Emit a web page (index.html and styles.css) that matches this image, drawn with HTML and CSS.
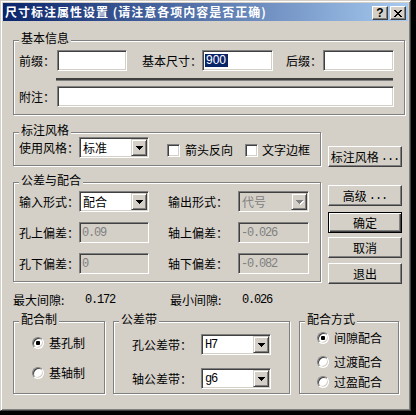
FILE: index.html
```html
<!DOCTYPE html>
<html lang="zh-CN">
<head>
<meta charset="utf-8">
<title>尺寸标注属性设置</title>
<link rel="stylesheet" href="styles.css">
</head>
<body>
<div class="win">
  <div class="titlebar">
    <span class="title">尺寸标注属性设置 (请注意各项内容是否正确)</span>
    <span class="cap-btns">
      <span class="cap-btn help">?</span>
      <span class="cap-btn close"><svg width="8" height="7" viewBox="0 0 8 7"><path d="M0 0h2v1H0zM6 0h2v1H6zM1 1h2v1H1zM5 1h2v1H5zM2 2h4v1H2zM3 3h2v1H3zM2 4h4v1H2zM1 5h2v1H1zM5 5h2v1H5zM0 6h2v1H0zM6 6h2v1H6z"/></svg></span>
    </span>
  </div>
  <div class="client">
    <div class="grp g-basic">
      <span class="grp-title">基本信息</span>
      <div class="row">
        <span class="lbl w38">前缀：</span><span class="field w70"></span>
        <span class="lbl ml15 w60">基本尺寸：</span><span class="field w71"><span class="sel">900</span></span>
        <span class="lbl ml13 w37">后缀：</span><span class="field w71"></span>
      </div>
      <div class="sep"></div>
      <div class="row row-note">
        <span class="lbl w38">附注：</span><span class="field w337"></span>
      </div>
    </div>

    <div class="row-b">
      <div class="grp g-style">
        <span class="grp-title">标注风格</span>
        <span class="lbl w60 tall">使用风格：</span>
        <span class="combo w70"><span class="val">标准</span><span class="dd"><svg width="7" height="4" viewBox="0 0 7 4"><path d="M0 0h7v1H0zM1 1h5v1H1zM2 2h3v1H2zM3 3h1v1H3z"/></svg></span></span>
        <span class="chk ml18"></span><span class="lbl chk-lbl ml5">箭头反向</span>
        <span class="chk ml12"></span><span class="lbl chk-lbl ml4">文字边框</span>
      </div>
      <span class="btn btn-style">标注风格<span class="mono">...</span></span>
    </div>

    <div class="row-c">
      <div class="grp g-tol">
        <span class="grp-title">公差与配合</span>
        <div class="row">
          <span class="lbl w60">输入形式：</span>
          <span class="combo w70"><span class="val">配合</span><span class="dd"><svg width="7" height="4" viewBox="0 0 7 4"><path d="M0 0h7v1H0zM1 1h5v1H1zM2 2h3v1H2zM3 3h1v1H3z"/></svg></span></span>
          <span class="lbl ml19 w70">输出形式：</span>
          <span class="combo w71 disabled"><span class="val">代号</span><span class="dd"><svg width="8" height="5" viewBox="0 0 8 5"><path class="hl" d="M1 1h7v1H1zM2 2h5v1H2zM3 3h3v1H3zM4 4h1v1H4z"/><path d="M0 0h7v1H0zM1 1h5v1H1zM2 2h3v1H2zM3 3h1v1H3z"/></svg></span></span>
        </div>
        <div class="row">
          <span class="lbl w60">孔上偏差：</span>
          <span class="field w70 disabled"><span class="mono">0.09</span></span>
          <span class="lbl ml19 w70">轴上偏差：</span>
          <span class="field w71 disabled"><span class="mono">-0.026</span></span>
        </div>
        <div class="row">
          <span class="lbl w60">孔下偏差：</span>
          <span class="field w70 disabled"><span class="mono">0</span></span>
          <span class="lbl ml19 w70">轴下偏差：</span>
          <span class="field w71 disabled"><span class="mono">-0.082</span></span>
        </div>
      </div>
      <div class="btn-col">
        <span class="btn b-adv">高级<span class="mono">...</span></span>
        <span class="btn btn-default b-ok">确定</span>
        <span class="btn b-cancel">取消</span>
        <span class="btn b-exit">退出</span>
      </div>
    </div>

    <div class="row-d">
      <span class="gap-lbl">最大间隙:</span><span class="mono gap-val">0.172</span>
      <span class="gap-lbl">最小间隙:</span><span class="mono gap-val">0.026</span>
    </div>

    <div class="row-e">
      <div class="grp g-fit">
        <span class="grp-title">配合制</span>
        <div class="opt"><span class="radio on"></span><span class="lbl">基孔制</span></div>
        <div class="opt opt-2"><span class="radio"></span><span class="lbl">基轴制</span></div>
      </div>
      <div class="grp g-band">
        <span class="grp-title">公差带</span>
        <div class="row">
          <span class="lbl w69">孔公差带：</span>
          <span class="combo w70"><span class="val mono">H7</span><span class="dd"><svg width="7" height="4" viewBox="0 0 7 4"><path d="M0 0h7v1H0zM1 1h5v1H1zM2 2h3v1H2zM3 3h1v1H3z"/></svg></span></span>
        </div>
        <div class="row">
          <span class="lbl w69">轴公差带：</span>
          <span class="combo w70"><span class="val mono">g6</span><span class="dd"><svg width="7" height="4" viewBox="0 0 7 4"><path d="M0 0h7v1H0zM1 1h5v1H1zM2 2h3v1H2zM3 3h1v1H3z"/></svg></span></span>
        </div>
      </div>
      <div class="grp g-mode">
        <span class="grp-title">配合方式</span>
        <div class="opt"><span class="radio on"></span><span class="lbl">间隙配合</span></div>
        <div class="opt opt-b"><span class="radio"></span><span class="lbl">过渡配合</span></div>
        <div class="opt opt-c"><span class="radio"></span><span class="lbl">过盈配合</span></div>
      </div>
    </div>
  </div>
</div>
</body>
</html>
```

FILE: styles.css
```css
html, body {
  margin: 0;
  padding: 0;
}
body {
  width: 416px;
  height: 415px;
  overflow: hidden;
  background: #000;
  font-family: "Noto Sans CJK SC", sans-serif;
  font-size: 12px;
  line-height: 14px;
  color: #000;
}

.win {
  box-sizing: border-box;
  width: 411px;
  height: 411px;
  background: #d4d0c8;
  border: 1px solid;
  border-color: #d4d0c8 #404040 #404040 #d4d0c8;
  box-shadow: inset 1px 1px #fff, inset -1px -1px #808080;
  padding: 2px;
}

.titlebar {
  height: 18px;
  display: flex;
  align-items: center;
  justify-content: space-between;
  background: linear-gradient(to right, #0a246a, #a6caf0);
  padding: 0 2px 0 2px;
}
.title {
  color: #fff;
  font-weight: bold;
  letter-spacing: 1px;
  white-space: nowrap;
}
.cap-btns {
  display: flex;
  gap: 2px;
  align-self: flex-end;
  margin-bottom: 1px;
}
.cap-btn {
  box-sizing: border-box;
  width: 16px;
  height: 14px;
  background: #d4d0c8;
  border: 1px solid;
  border-color: #fff #404040 #404040 #fff;
  box-shadow: inset -1px -1px #808080;
  display: flex;
  align-items: center;
  justify-content: center;
}
.help {
  font-family: "Liberation Sans", sans-serif;
  font-weight: bold;
  font-size: 12px;
  line-height: 12px;
}
.close svg { display: block; margin-left: -1px; }

.client {
  padding: 19px 0 0 10px;
}

/* group boxes */
.grp {
  position: relative;
  box-sizing: border-box;
  border: 1px solid #808080;
  box-shadow: inset 1px 1px #fff, 1px 1px #fff;
}
.grp-title {
  position: absolute;
  top: -10px;
  left: 5px;
  padding: 0 2px;
  background: #d4d0c8;
  line-height: 14px;
  white-space: nowrap;
}

.row {
  display: flex;
  align-items: center;
  height: 21px;
}
.lbl {
  white-space: nowrap;
  flex: none;
}
.w37 { width: 37px; }
.w38 { width: 38px; }
.w60 { width: 60px; }
.w69 { width: 69px; }
.w70 { width: 70px; }
.w71 { width: 71px; }
.w337 { width: 337px; }
.ml4 { margin-left: 4px; }
.ml5 { margin-left: 5px; }
.ml12 { margin-left: 12px; }
.ml13 { margin-left: 13px; }
.ml15 { margin-left: 15px; }
.ml18 { margin-left: 18px; }
.ml19 { margin-left: 19px; }

/* sunken edit fields */
.field, .combo {
  box-sizing: border-box;
  height: 21px;
  flex: none;
  background: #fff;
  border: 1px solid;
  border-color: #808080 #fff #fff #808080;
  box-shadow: inset 1px 1px #404040, inset -1px -1px #d4d0c8;
  display: flex;
  align-items: center;
}
.field {
  padding-left: 1px;
}
.field.disabled, .combo.disabled {
  background: #d4d0c8;
  color: #808080;
}
.sel {
  margin-left: 1px;
  background: #0a246a;
  color: #fff;
  font-family: "Liberation Sans", sans-serif;
  font-size: 12px;
  line-height: 13px;
  padding: 0 2px 0 1px;
}

.combo {
  padding: 1px;
}
.combo .val {
  flex: 1;
  padding-left: 2px;
  white-space: nowrap;
}
.dd {
  box-sizing: border-box;
  width: 16px;
  height: 17px;
  flex: none;
  background: #d4d0c8;
  border: 1px solid;
  border-color: #d4d0c8 #404040 #404040 #d4d0c8;
  box-shadow: inset 1px 1px #fff, inset -1px -1px #808080;
  display: flex;
  align-items: center;
  justify-content: center;
}
.dd svg { display: block; }
.combo.disabled .dd svg path { fill: #808080; }
.combo.disabled .dd svg path.hl { fill: #fff; }
.combo.disabled .dd svg { margin: 1px 0 0 1px; }

.mono {
  font-family: "Liberation Mono", monospace;
  font-size: 12px;
  letter-spacing: -1.2px;
}

/* separator */
.sep {
  box-sizing: border-box;
  width: 337px;
  height: 3px;
  margin: 7px 0 0 37px;
  border-top: 2px solid #404040;
  border-bottom: 1px solid #808080;
}
.row-note { margin-top: 5px; }

.g-basic {
  width: 392px;
  height: 75px;
  padding: 9px 0 0 5px;
}

/* style row */
.row-b {
  display: flex;
  align-items: flex-start;
  margin-top: 17px;
}
.g-style {
  width: 308px;
  height: 34px;
  padding: 4px 0 0 5px;
  display: flex;
  align-items: flex-start;
}
.g-style .tall { line-height: 21px; }
.chk {
  box-sizing: border-box;
  width: 13px;
  height: 13px;
  flex: none;
  margin-top: 7px;
  background: #fff;
  border: 1px solid;
  border-color: #808080 #fff #fff #808080;
  box-shadow: inset 1px 1px #404040, inset -1px -1px #d4d0c8;
}
.chk-lbl { margin-top: 6px; }

/* buttons */
.btn {
  box-sizing: border-box;
  width: 74px;
  height: 21px;
  flex: none;
  background: #d4d0c8;
  border: 1px solid;
  border-color: #fff #404040 #404040 #fff;
  box-shadow: inset -1px -1px #808080;
  display: flex;
  align-items: center;
  justify-content: center;
  white-space: nowrap;
}
.btn .mono { margin-left: 2px; letter-spacing: -1px; }
.btn-default {
  border: 1px solid #000;
  box-shadow: inset 1px 1px #fff, inset -1px -1px #404040, inset -2px -2px #808080;
}
.btn-style { margin: 14px 0 0 7px; }

/* tolerance row */
.row-c {
  display: flex;
  align-items: flex-start;
  margin-top: 15px;
}
.g-tol {
  width: 308px;
  height: 100px;
  padding: 8px 0 0 5px;
  display: flex;
  flex-direction: column;
  gap: 10px;
}
.g-tol .field .mono { margin-left: 1px; }
.btn-col {
  display: flex;
  flex-direction: column;
  margin-left: 7px;
}
.b-adv { margin-top: 3px; }
.b-ok { margin-top: 6px; }
.b-cancel { margin-top: 4px; }
.b-exit { margin-top: 5px; }

/* clearance row */
.row-d {
  display: flex;
  margin-top: 9px;
  line-height: 14px;
}
.gap-lbl { width: 72px; white-space: nowrap; }
.gap-val { width: 85px; }

/* bottom groups */
.row-e {
  display: flex;
  margin-top: 14px;
}
.g-fit {
  width: 92px;
  height: 73px;
  padding: 14px 0 0 18px;
}
.g-band {
  width: 177px;
  height: 73px;
  margin-left: 8px;
  padding: 12px 0 0 18px;
  display: flex;
  flex-direction: column;
  gap: 13px;
}
.g-mode {
  width: 100px;
  height: 73px;
  margin-left: 9px;
  padding: 9px 0 0 17px;
}
.opt {
  display: flex;
  align-items: center;
  height: 14px;
}
.opt .lbl { margin-left: 5px; }
.opt-2 { margin-top: 16px; }
.opt-b { margin-top: 10px; }
.opt-c { margin-top: 6px; }

.radio {
  box-sizing: border-box;
  width: 12px;
  height: 12px;
  flex: none;
  border-radius: 50%;
  background: #fff;
  border: 1px solid;
  border-color: #808080 #fff #fff #808080;
  box-shadow: inset 1px 1px #404040, inset -1px -1px #d4d0c8;
  display: flex;
  align-items: center;
  justify-content: center;
}
.radio.on::after {
  content: "";
  width: 4px;
  height: 4px;
  border-radius: 1px;
  background: #000;
}
```
